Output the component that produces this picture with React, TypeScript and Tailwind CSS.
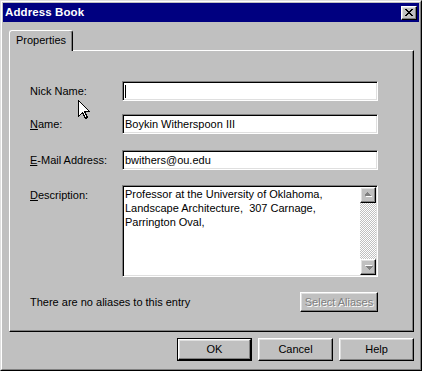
import React from "react";

const bevel =
  "border border-t-white border-l-white border-r-black border-b-black shadow-[inset_-1px_-1px_0_#808080,inset_1px_1px_0_#dfdfdf]";
const sunken =
  "border border-t-[#808080] border-l-[#808080] border-r-white border-b-white shadow-[inset_1px_1px_0_#000,inset_-1px_-1px_0_#dfdfdf]";

const CloseGlyph = () => (
  <svg width="8" height="7" viewBox="0 0 8 7" shapeRendering="crispEdges" fill="#000">
    <rect x="0" y="0" width="2" height="1" />
    <rect x="6" y="0" width="2" height="1" />
    <rect x="1" y="1" width="2" height="1" />
    <rect x="5" y="1" width="2" height="1" />
    <rect x="2" y="2" width="4" height="1" />
    <rect x="3" y="3" width="2" height="1" />
    <rect x="2" y="4" width="4" height="1" />
    <rect x="1" y="5" width="2" height="1" />
    <rect x="5" y="5" width="2" height="1" />
    <rect x="0" y="6" width="2" height="1" />
    <rect x="6" y="6" width="2" height="1" />
  </svg>
);

const Arrow = ({ down }: { down?: boolean }) => (
  <svg width="9" height="6" viewBox="0 0 9 6" shapeRendering="crispEdges">
    <g transform={down ? "rotate(180 4.5 3)" : undefined}>
      <path d="M2 5h6v-1h-1v-1h-1v-1h-1v-1h-1v1h-1v1h-1v1h-1z" fill="#fff" />
      <path d="M1 4h6v-1h-1v-1h-1v-1h-1v-1h-1v1h-1v1h-1v1h-1z" fill="#808080" />
    </g>
  </svg>
);

const Field = ({ children }: { children?: React.ReactNode }) => (
  <div className={`${sunken} bg-white w-[256px] h-[20px] flex items-center pl-[2px]`}>{children}</div>
);

const Button = ({ label }: { label: string }) => (
  <div className={`${bevel} w-[75px] h-[23px] flex items-center justify-center`}>{label}</div>
);

export default function App() {
  return (
    <div className="relative w-[422px] h-[371px] bg-[#c0c0c0] border border-t-[#dfdfdf] border-l-[#dfdfdf] border-r-black border-b-black font-['Liberation_Sans',Arial,sans-serif] text-[11px] text-black">
      <div className="h-full border border-t-white border-l-white border-r-[#808080] border-b-[#808080] p-px flex flex-col">
        {/* title bar */}
        <div className="h-[19px] bg-[#000080] flex items-center justify-between pl-[2px] pr-[2px]">
          <span className="text-white font-bold text-[11.5px] tracking-[0.1px]">Address Book</span>
          <div className={`${bevel} bg-[#c0c0c0] w-[16px] h-[14px] flex items-center justify-center`}>
            <CloseGlyph />
          </div>
        </div>

        <div className="flex flex-col pl-[6px] pr-[5px] mt-[8px]">
          {/* tab */}
          <div className="relative z-10 -mb-px w-[64px] h-[21px] bg-[#c0c0c0] border-l border-t border-r border-l-white border-t-white border-r-black rounded-t-[3px] shadow-[inset_-1px_0_0_#808080] flex items-center justify-center pb-[2px]">
            Properties
          </div>

          {/* panel */}
          <div className="h-[282px] border border-t-white border-l-white border-r-black border-b-black shadow-[inset_-1px_-1px_0_#808080] pl-[20px] pt-[30px]">
            <div className="w-[348px] flex flex-col">
              <div className="flex items-center">
                <span className="w-[92px]">Nick Name:</span>
                <Field>
                  <span className="w-px h-[13px] bg-black" />
                </Field>
              </div>

              <div className="flex items-center mt-[13px]">
                <span className="w-[92px]">
                  <u>N</u>ame:
                </span>
                <Field>Boykin Witherspoon III</Field>
              </div>

              <div className="flex items-center mt-[16px]">
                <span className="w-[92px]">
                  <u>E</u>-Mail Address:
                </span>
                <Field>bwithers@ou.edu</Field>
              </div>

              <div className="flex items-start mt-[15px]">
                <span className="w-[92px] pt-[2px]">
                  <u>D</u>escription:
                </span>
                <div className={`${sunken} bg-white w-[256px] h-[92px] flex p-px`}>
                  <div className="flex-1 pl-px leading-[14px] whitespace-pre">
                    {"Professor at the University of Oklahoma,\nLandscape Architecture,  307 Carnage,\nParrington Oval,"}
                  </div>
                  <div className="w-[16px] flex flex-col">
                    <div className={`${bevel} bg-[#c0c0c0] h-[16px] flex items-center justify-center`}>
                      <Arrow />
                    </div>
                    <div className="flex-1 bg-[repeating-conic-gradient(#fff_0_25%,#c0c0c0_0_50%)] bg-[length:2px_2px]" />
                    <div className={`${bevel} bg-[#c0c0c0] h-[16px] flex items-center justify-center`}>
                      <Arrow down />
                    </div>
                  </div>
                </div>
              </div>

              <div className="flex items-center justify-between mt-[15px]">
                <span>There are no aliases to this entry</span>
                <div
                  className={`${bevel} w-[78px] h-[20px] flex items-center justify-center text-[#808080] [text-shadow:1px_1px_0_#fff]`}
                >
                  Select Aliases
                </div>
              </div>
            </div>
          </div>

          {/* buttons */}
          <div className="flex justify-end gap-[6px] mt-[6px]">
            <div className="border border-black w-[75px] h-[23px]">
              <div className={`${bevel} w-full h-full flex items-center justify-center`}>OK</div>
            </div>
            <Button label="Cancel" />
            <Button label="Help" />
          </div>
        </div>
      </div>

      {/* mouse pointer */}
      <svg className="absolute left-[77px] top-[99px]" width="13" height="20" viewBox="0 0 13 20">
        <path
          d="M0.5 0.5 L0.5 16.5 L4.5 12.5 L7.5 18.5 L9.5 17.5 L6.5 11.5 L11.5 11.5 Z"
          fill="#fff"
          stroke="#000"
          strokeWidth="1"
          shapeRendering="crispEdges"
        />
      </svg>
    </div>
  );
}
